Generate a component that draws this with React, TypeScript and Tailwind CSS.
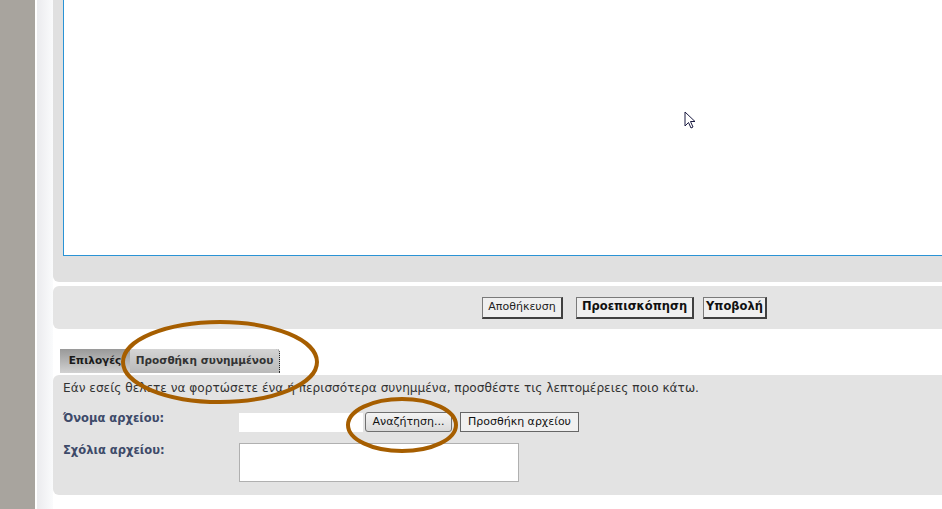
import React from "react";

function Cursor() {
  return (
    <svg className="absolute left-[684px] top-[111px]" width="14" height="20" viewBox="0 0 14 20">
      <path d="M1 1 L1 15 L4.5 11.5 L7 17 L9 16 L6.5 10.5 L11 10.5 Z" fill="#fff" stroke="#1a1a40" strokeWidth="1" strokeLinejoin="round" />
    </svg>
  );
}

function Annotations() {
  return (
    <svg className="pointer-events-none absolute inset-0" width="942" height="509">
      <ellipse cx="220" cy="362" rx="97" ry="40" fill="none" stroke="#a65e00" strokeWidth="4" />
      <ellipse cx="402" cy="425" rx="54" ry="26" fill="none" stroke="#a65e00" strokeWidth="4" />
    </svg>
  );
}

export default function App() {
  return (
    <div className="relative flex h-[509px] w-[942px] overflow-hidden bg-white font-['DejaVu_Sans',Verdana,sans-serif] text-[12px] text-[#222]">
      {/* left chrome */}
      <div className="w-[35px] shrink-0 bg-[#a8a49e]" />
      <div className="w-[2px] shrink-0 bg-white" />
      <div className="w-[16px] shrink-0 bg-gradient-to-r from-[#ebebee] to-[#fafbfc]" />

      <div className="flex min-w-0 flex-1 flex-col">
        {/* editor panel */}
        <div className="h-[282px] shrink-0 rounded-bl-[6px] bg-[#e0e0e0] pl-[10px]">
          <div className="h-[256px] border-b border-l border-[#2a93d5] bg-white" />
        </div>

        {/* action bar */}
        <div className="mt-[4px] flex h-[43px] shrink-0 items-center rounded-l-[6px] bg-[#e4e4e4] pl-[429px]">
          <button className="h-[22px] w-[81px] border border-[#7a7a7a] border-b-2 border-r-2 border-b-[#404040] border-r-[#404040] bg-[#efefef] text-[11px] text-[#222]">
            Αποθήκευση
          </button>
          <button className="ml-[13px] h-[22px] w-[118px] border border-[#7a7a7a] border-b-2 border-r-2 border-b-[#404040] border-r-[#404040] bg-[#efefef] text-[11.5px] font-bold text-[#111]">
            Προεπισκόπηση
          </button>
          <button className="ml-[9px] h-[22px] w-[64px] border border-[#7a7a7a] border-b-2 border-r-2 border-b-[#404040] border-r-[#404040] bg-[#efefef] text-[11.5px] font-bold text-[#111]">
            Υποβολή
          </button>
        </div>

        {/* tabs */}
        <div className="mt-[20px] flex h-[24px] shrink-0 items-stretch pl-[7px]">
          <div className="flex w-[70px] items-center justify-center bg-gradient-to-b from-[#999999] to-[#d2d2d2] text-[10.5px] font-bold text-[#1a1a1a]">
            Επιλογές
          </div>
          <div className="flex w-[150px] items-center justify-center rounded-tr-[4px] border-r border-dotted border-r-[#222] bg-gradient-to-b from-[#d4d4d4] to-[#b9b9b9] text-[10.5px] font-bold text-[#333]">
            Προσθήκη συνημμένου
          </div>
        </div>

        {/* attachment panel */}
        <div className="mt-[2px] h-[120px] shrink-0 rounded-l-[6px] bg-[#e3e3e3] pl-[10px] pt-[6px]">
          <p className="text-[12.15px] leading-[15px] text-[#333]">
            Εάν εσείς θέλετε να φορτώσετε ένα ή περισσότερα συνημμένα, προσθέστε τις λεπτομέρειες ποιο κάτω.
          </p>
          <div className="mt-[16px] flex items-center">
            <label className="w-[176px] -translate-y-[3px] text-[11.5px] font-bold text-[#3d4a69]">Όνομα αρχείου:</label>
            <div className="h-[19px] w-[124px] bg-white" />
            <button className="ml-[2px] h-[20px] w-[87px] rounded-[3px] border border-[#707070] bg-gradient-to-b from-[#f4f4f4] to-[#dadada] text-[11px] text-[#111]">
              Αναζήτηση...
            </button>
            <button className="ml-[8px] h-[20px] w-[119px] border border-[#666] bg-[#f0f0f0] text-[11px] text-[#111]">
              Προσθήκη αρχείου
            </button>
          </div>
          <div className="mt-[11px] flex items-start">
            <label className="w-[176px] -mt-[1px] text-[11.5px] font-bold text-[#3d4a69]">Σχόλια αρχείου:</label>
            <div className="h-[39px] w-[280px] border border-[#b0b0b0] bg-white" />
          </div>
        </div>
      </div>

      <Cursor />
      <Annotations />
    </div>
  );
}
